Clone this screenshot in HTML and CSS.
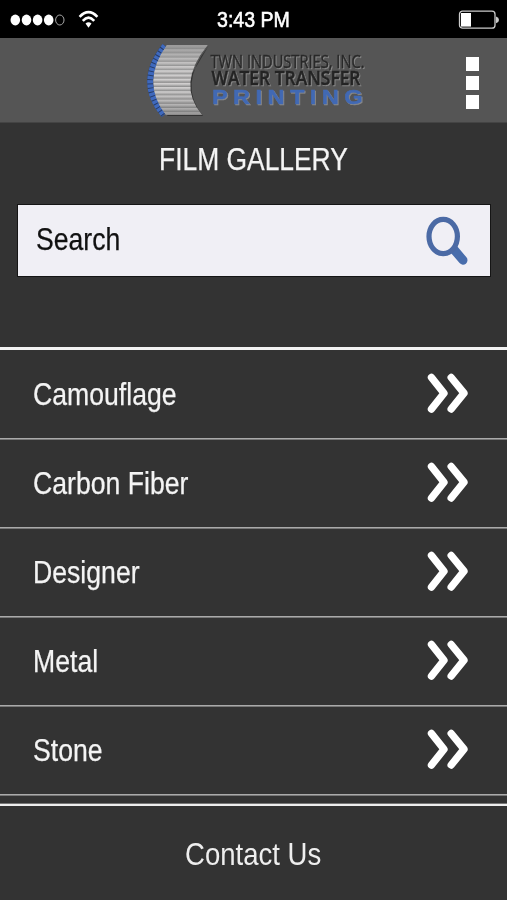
FILE: index.html
```html
<!DOCTYPE html>
<html lang="en">
<head>
<meta charset="utf-8">
<title>Film Gallery</title>
<link rel="stylesheet" href="styles.css">
</head>
<body>
<svg class="defs" width="0" height="0" aria-hidden="true">
  <symbol id="chevrons" viewBox="0 0 42 42"><path d="M4.5 4.5 17 20.2 4.5 36M24.2 4.5 37 20.2 24.2 36" fill="none" stroke="#fff" stroke-width="7.4" stroke-linecap="round" stroke-linejoin="round"/></symbol>
</svg>
<div class="status">
  <svg class="signal" width="78" height="38" viewBox="0 0 78 38">
    <g fill="#fff"><ellipse cx="15.3" cy="20" rx="4.8" ry="5.4"/><ellipse cx="26.5" cy="20" rx="4.8" ry="5.4"/><ellipse cx="37.6" cy="20" rx="4.8" ry="5.4"/><ellipse cx="48.7" cy="20" rx="4.8" ry="5.4"/></g>
    <ellipse cx="59.8" cy="20" rx="4.2" ry="5" fill="none" stroke="#aaa" stroke-width="1"/>
  </svg>
  <svg class="wifi" width="22" height="20" viewBox="0 0 22 20">
    <path d="M1.600 6.800Q10.500-2.600 19.400 6.800M4.800 10.800Q10.500 4.500 16.200 10.800" fill="none" stroke="#fff" stroke-width="2.600"/>
    <path d="M7.500 13.600Q10.500 10.800 13.500 13.600L10.500 17.800Z" fill="#fff"/>
  </svg>
  <div class="time"><span>3:43 PM</span></div>
  <svg class="battery" width="42" height="22" viewBox="0 0 42 22">
    <rect x="1.5" y="2.2" width="35.5" height="17" rx="3" fill="none" stroke="#ccc" stroke-width="1.3"/>
    <path d="M3 4h10v13.600H3z" fill="#fff"/><path d="M38 7.500q3 1 3 3.400t-3 3.400z" fill="#ccc"/>
  </svg>
</div>
<header class="bar">
  <svg class="logo" width="240" height="84" viewBox="140 38 240 84">
    <defs>
      <pattern id="slats" width="80" height="4.2" y="45" patternUnits="userSpaceOnUse"><path d="M0 0h80v4.2H0z" fill="#b2b0b0"/><path d="M0 0h80v1.4H0z" fill="#d2d0d0"/><path d="M0 3h80v1.2H0z" fill="#808080"/></pattern>
      <linearGradient id="shade" x1="0" x2="0" y1="0" y2="1"><stop offset="0" stop-color="#888" stop-opacity=".75"/><stop offset=".5" stop-color="#ddd" stop-opacity=".15"/><stop offset="1" stop-color="#777" stop-opacity=".6"/></linearGradient>
    </defs>
    <path d="M165 46Q136 82 164 115" fill="none" stroke="#263c68" stroke-width="6"/>
    <path d="M165 46Q136 82 164 115" fill="none" stroke="#3f69bd" stroke-width="6" stroke-dasharray="3.200 1"/>
    <path d="M208.500 46Q177.500 85 203 116l-36 0z" fill="#333"/>
    <path d="M167 45h40.500Q176 84 202 115h-36Q140 82 167 45z" fill="url(#slats)"/>
    <path d="M167 45h40.500Q176 84 202 115h-36Q140 82 167 45z" fill="url(#shade)"/>
    <g class="logo-text">
      <text class="line-a" x="210.500" y="67.500" textLength="154" lengthAdjust="spacingAndGlyphs">TWN INDUSTRIES, INC.</text>
      <text class="line-b" x="211.500" y="85" textLength="149" lengthAdjust="spacingAndGlyphs">WATER TRANSFER</text>
      <text class="line-c" x="184.300" y="104.500" textLength="131" transform="scale(1.15 1)">PRINTING</text>
    </g>
  </svg>
  <div class="menu"><i></i><i></i><i></i></div>
</header>
<main>
  <h1><span>FILM GALLERY</span></h1>
  <div class="search">
    <span class="label">Search</span>
    <svg width="44" height="52" viewBox="0 0 44 52"><path d="M28.500 34 38 45.200" stroke="#486dac" stroke-width="9" stroke-linecap="round"/><ellipse cx="18.200" cy="21.500" rx="14.200" ry="17.200" fill="#f0eff5" stroke="#4b6aa5" stroke-width="5.200"/></svg>
  </div>
  <nav class="list">
    <a><span class="label">Camouflage</span><svg width="42" height="42"><use href="#chevrons"/></svg></a>
    <a><span class="label">Carbon Fiber</span><svg width="42" height="42"><use href="#chevrons"/></svg></a>
    <a><span class="label">Designer</span><svg width="42" height="42"><use href="#chevrons"/></svg></a>
    <a><span class="label">Metal</span><svg width="42" height="42"><use href="#chevrons"/></svg></a>
    <a><span class="label">Stone</span><svg width="42" height="42"><use href="#chevrons"/></svg></a>
  </nav>
</main>
<footer><span>Contact Us</span></footer>
</body>
</html>
```
FILE: styles.css
```css
* { box-sizing: border-box; }
html, body { margin: 0; height: 900px; overflow: hidden; }
body {
  display: flex;
  flex-direction: column;
  background: #333;
  color: #f4f4f4;
  font: 32px/36px "Liberation Sans", Arial, sans-serif;
}
.defs { position: absolute; }
svg { display: block; flex: none; }
.status {
  display: flex;
  height: 38px;
  background: #000;
  color: #fff;
}
.wifi { margin-top: 10px; }
.time {
  flex: 1;
  padding: 2px 0 0 117px;
  font-size: 22px;
  white-space: nowrap;
}
.time span {
  display: inline-block;
  transform: scaleX(.89);
  transform-origin: left;
  -webkit-text-stroke: .6px #fff;
}
.battery { margin: 9px 7px 0 0; }
.bar {
  display: flex;
  justify-content: space-between;
  height: 85px;
  padding: 0 28px 0 140px;
  background: #555;
  border-bottom: 1px solid #444;
}
.menu {
  display: flex;
  flex-direction: column;
  gap: 5px;
  padding-top: 19px;
}
.menu i { width: 13px; height: 14px; background: #fff; }
.logo-text { font-family: "Open Sans", sans-serif; filter: drop-shadow(1px 1px .3px #898989); }
.line-a { font-size: 18.5px; fill: #292929; stroke: #292929; stroke-width: .4px; }
.line-b { font-size: 19.5px; font-weight: 600; fill: #242424; stroke: #242424; stroke-width: .4px; }
.line-c { font-family: "Liberation Sans", sans-serif; font-size: 20.5px; font-weight: 700; fill: #4169b4; stroke: #4169b4; stroke-width: .5px; }
h1 {
  margin: 18px 0 27px;
  font-size: 32px;
  font-weight: 400;
  line-height: 36px;
  text-align: center;
}
h1 span { display: inline-block; transform: scaleX(.825); -webkit-text-stroke: .25px currentColor; }
.search {
  display: flex;
  align-items: center;
  justify-content: space-between;
  height: 73px;
  margin: 0 16px 0 17px;
  padding: 0 21px 0 18px;
  background: #f0eff5;
  border: 1px solid #151515;
  color: #111;
}
.label { display: inline-block; transform: scaleX(.832); transform-origin: left; -webkit-text-stroke: .25px currentColor; }
.search .label { margin-top: -3px; }
.list { margin-top: 70px; border-top: 3px solid #f2f2f2; }
.list a {
  display: flex;
  align-items: center;
  justify-content: space-between;
  height: 89px;
  padding: 0 38px 0 33px;
  border-bottom: 1px solid #aaa;
  box-shadow: 0 1px #777;
}
footer {
  height: 96px;
  margin-top: 9px;
  padding-top: 30px;
  border-top: 2px solid #eee;
  box-shadow: 0 -1px #777;
  text-align: center;
  color: #eee;
}
footer span { display: inline-block; transform: scaleX(.86); }
```
